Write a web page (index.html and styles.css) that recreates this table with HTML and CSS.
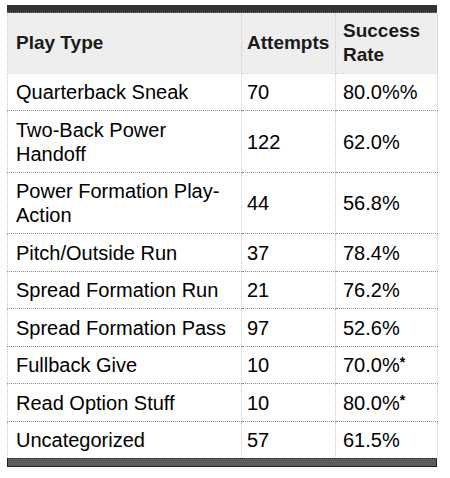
FILE: index.html
```html
<!DOCTYPE html>
<html>
<head>
<meta charset="utf-8">
<link rel="stylesheet" href="styles.css">
</head>
<body>
<div class="wrap">
  <div class="bar-top"></div>
  <table class="stats">
    <colgroup>
      <col class="c1"><col class="c2"><col class="c3">
    </colgroup>
    <thead>
      <tr><th>Play Type</th><th>Attempts</th><th>Success Rate</th></tr>
    </thead>
    <tbody>
      <tr><td>Quarterback Sneak</td><td>70</td><td>80.0%%</td></tr>
      <tr><td>Two-Back Power Handoff</td><td>122</td><td>62.0%</td></tr>
      <tr><td>Power Formation Play-Action</td><td>44</td><td>56.8%</td></tr>
      <tr><td>Pitch/Outside Run</td><td>37</td><td>78.4%</td></tr>
      <tr><td>Spread Formation Run</td><td>21</td><td>76.2%</td></tr>
      <tr><td>Spread Formation Pass</td><td>97</td><td>52.6%</td></tr>
      <tr><td>Fullback Give</td><td>10</td><td>70.0%<sup>*</sup></td></tr>
      <tr><td>Read Option Stuff</td><td>10</td><td>80.0%<sup>*</sup></td></tr>
      <tr><td>Uncategorized</td><td>57</td><td>61.5%</td></tr>
    </tbody>
  </table>
  <div class="bar-bottom"></div>
</div>
</body>
</html>
```
FILE: styles.css
```css
html, body {
  margin: 0;
  padding: 0;
  background: #fff;
}
.wrap {
  width: 430px;
  padding: 5px 0 0 7px;
}
.bar-top {
  height: 7px;
  background: #333;
  border-bottom: 1px dotted #777;
}
.stats {
  width: 430px;
  border-collapse: collapse;
  table-layout: fixed;
  font-family: "Liberation Sans", Arial, sans-serif;
  font-size: 20px;
  line-height: 24px;
  color: #000;
}
.c1 { width: 234px; }
.c2 { width: 94px; }
.c3 { width: 102px; }
.stats th, .stats td {
  padding: 6.5px 8px 6px 8px;
  text-align: left;
  vertical-align: middle;
  border-left: 1px dotted #c8c8c8;
  border-right: 1px dotted #c8c8c8;
  border-bottom: 1px dotted #8a8a8a;
}
.stats th {
  background: #eeeeee;
  font-weight: bold;
  font-size: 19px;
  line-height: 24px;
  padding-top: 5.5px;
  color: #1a1a1a;
  border-bottom: 1px dotted #d0d0d0;
}
.stats td:nth-child(2), .stats th:nth-child(2) {
  padding-left: 5px;
}
.stats td:nth-child(3), .stats th:nth-child(3) {
  padding-left: 7px;
}
.stats tbody tr:last-child td {
  border-bottom: none;
}
.stats sup {
  font-size: 14px;
  font-weight: bold;
  line-height: 0;
  vertical-align: 5px;
}
.bar-bottom {
  height: 7px;
  background: #5c5c5c;
  border: 1px solid #222;
  border-top: 1px dotted #222;
}
```
